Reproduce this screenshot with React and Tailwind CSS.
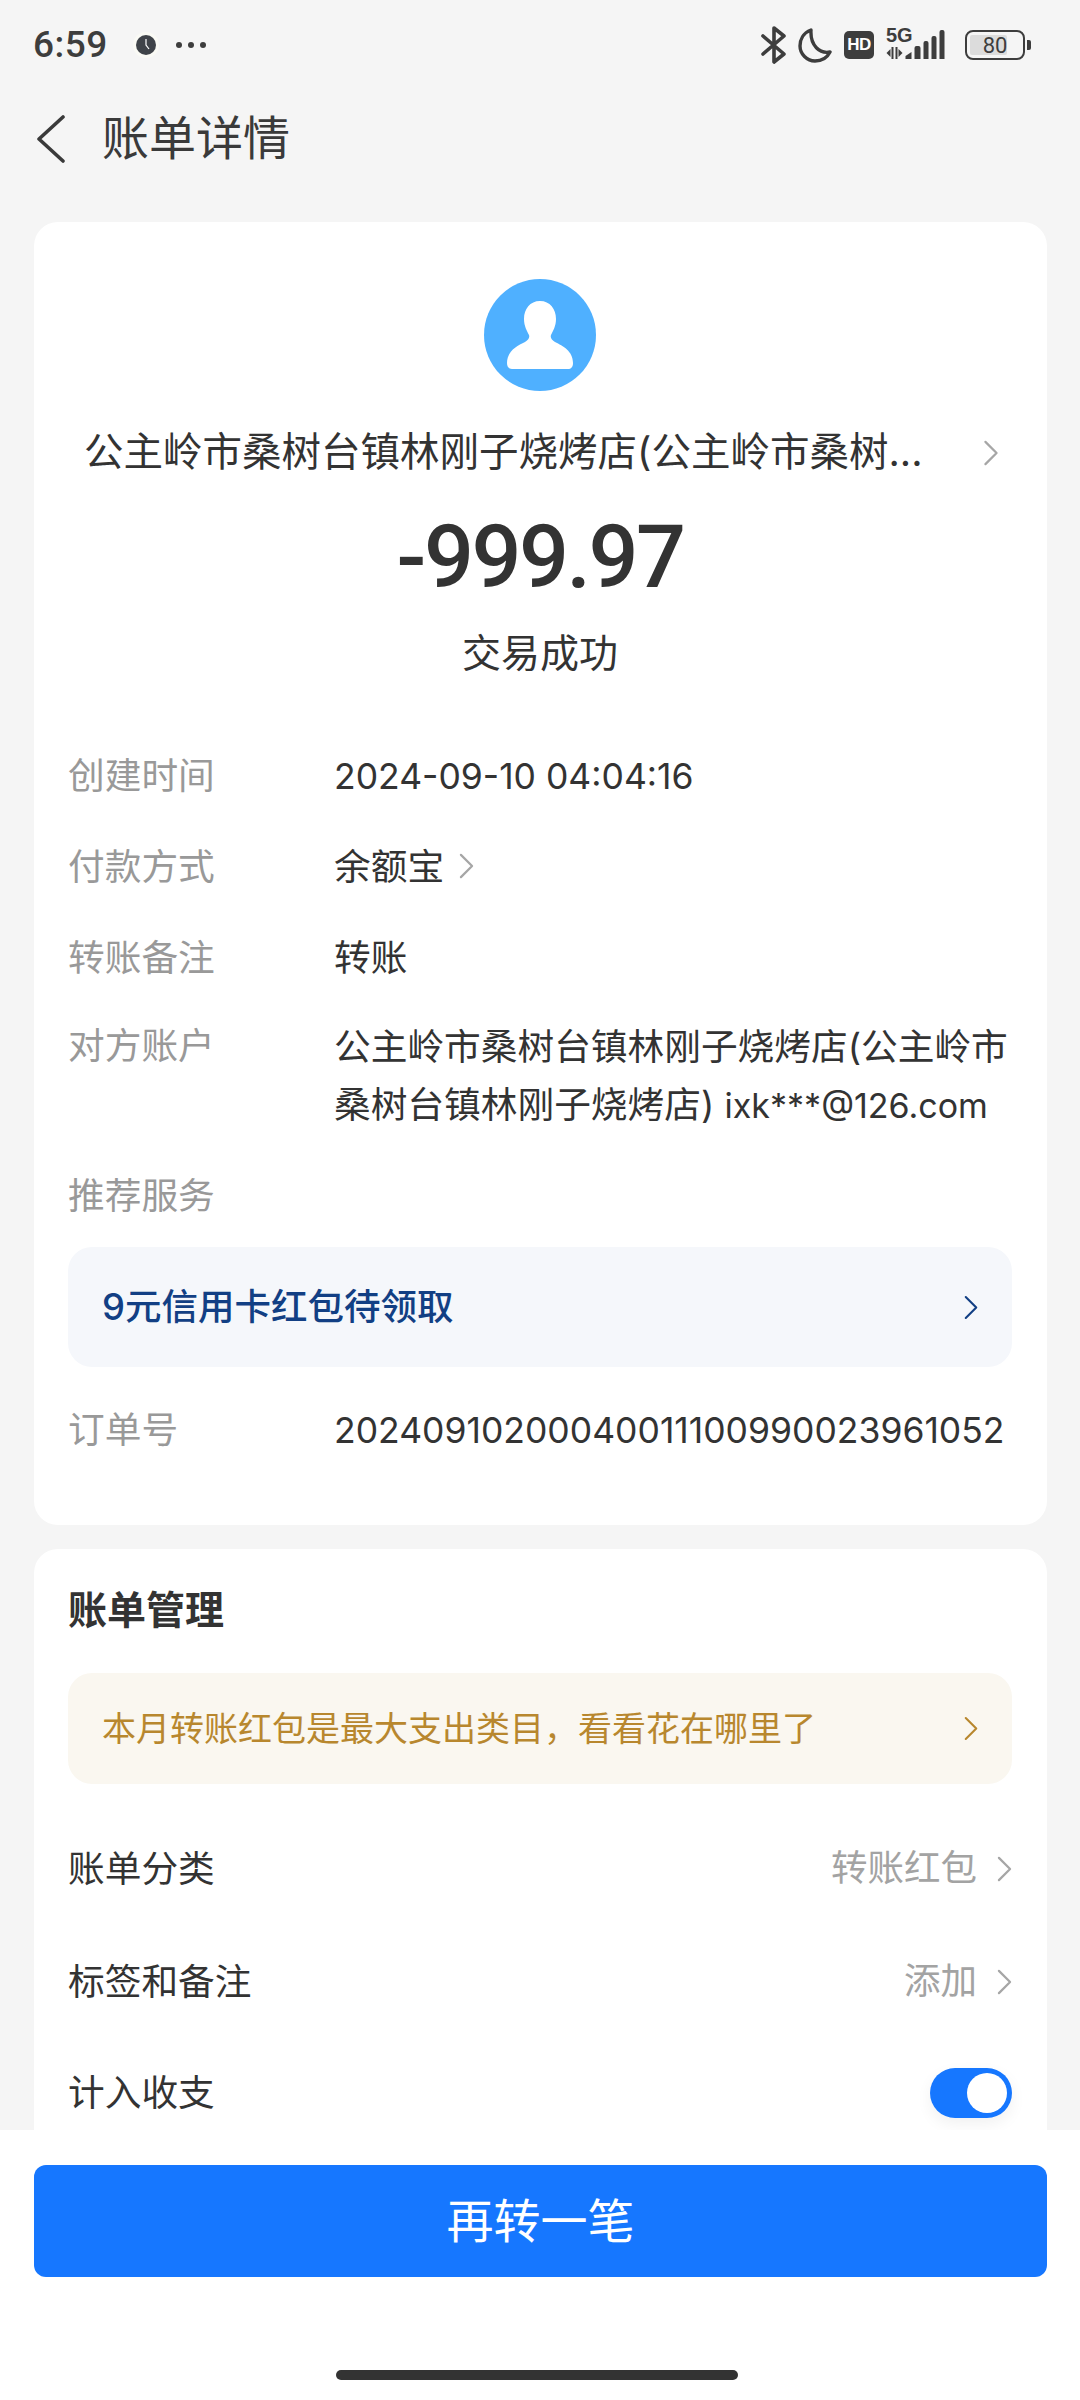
const cjk = "font-['Inter','Noto_Sans_CJK_SC',sans-serif]";

const Chevron = ({ className = "", color = "#a6a6a6", width = 2.4 }) => (
  <svg viewBox="0 0 16 28" className={className} fill="none" stroke={color} strokeWidth={width} strokeLinecap="round" strokeLinejoin="round">
    <path d="M2 2l12 12L2 26" />
  </svg>
);

const StatusIcons = () => (
  <div className="flex items-center">
    {/* bluetooth */}
    <svg viewBox="0 0 26 38" className="w-[26px] h-[38px]" fill="none" stroke="#3d3d3d" strokeWidth="3.6" strokeLinecap="round" strokeLinejoin="round">
      <path d="M2 10l21 18-10 8V2l10 8L2 28" />
    </svg>
    {/* do not disturb */}
    <svg viewBox="0 0 34 36" className="w-[34px] h-[36px] ml-[11px]" fill="none" stroke="#3d3d3d" strokeWidth="3.4" strokeLinejoin="round">
      <path d="M13 3C5 6 2 13 2 19c0 8 7 15 15 15 7 0 12-3 15-9-10 2-20-6-19-22z" />
    </svg>
    <div className="w-[30px] h-[28px] ml-[12px] rounded-[5px] bg-[#3d3d3d] flex items-center justify-center text-white text-[17px] font-bold font-['Liberation_Sans',sans-serif] tracking-[-0.5px]">
      HD
    </div>
    {/* 5G with data arrows and signal bars */}
    <div className="relative w-[66px] h-[32px] ml-[12px]">
      <span className="absolute left-0 top-[-5px] text-[#3d3d3d] text-[20px] leading-[22px] font-bold font-['Liberation_Sans',sans-serif]">5G</span>
      <svg viewBox="0 0 65 32" className="w-[66px] h-[32px]" fill="#3d3d3d">
        <path d="M0 24l4-4v8zM5 18h2v12H5zM9 18h2v12H9zM12 20l4 4-4 4z" />
        <path d="M19 30v-3l6-4v7zM28 30V19q0-2 2-2h2q2 0 2 2v11zM37 30V14q0-2 2-2h1q2 0 2 2v16zM45 30V9q0-2 2-2h1q2 0 2 2v21zM53 30V3q0-2 2-2h1q2 0 2 2v27z" />
      </svg>
    </div>
    {/* battery */}
    <div className="ml-[13px] flex items-center">
      <div className="w-[60px] h-[30px] rounded-[8px] border-[2.5px] border-[#3d3d3d] p-[3px] relative flex">
        <div className="w-[37px] h-full rounded-[2px] bg-[#dcdcdc]" />
        <span className="absolute inset-0 flex items-center justify-center text-[#3d3d3d] text-[22px] font-['Roboto',sans-serif]">80</span>
      </div>
      <div className="w-[4px] h-[10px] ml-[2px] rounded-r-[2px] bg-[#3d3d3d]" />
    </div>
  </div>
);

const DetailRow = ({ label, children, className = "h-[91px] items-center" }) => (
  <div className={`flex ${className}`}>
    <div className="w-[266px] shrink-0 text-[36.7px] text-[#999999]">{label}</div>
    <div className="flex-1 min-w-0 text-[36.7px] text-[#333333]">{children}</div>
  </div>
);

const ManageRow = ({ label, value, className = "" }) => (
  <div className={`flex items-center justify-between h-[113px] ${className}`}>
    <span className="text-[36.7px] text-[#333333]">{label}</span>
    <span className="flex items-center text-[36.5px] text-[#a3a3a3]">
      {value}
      <Chevron className="w-[15px] h-[26px] ml-[20px]" />
    </span>
  </div>
);

export default function App() {
  return (
    <div className={`w-[1080px] h-[2400px] flex flex-col overflow-hidden bg-[#f5f5f5] ${cjk}`}>
      <div className="h-[90px] shrink-0 flex items-center justify-between pl-[33px] pr-[49px]">
        <div className="flex items-center">
          <span className="text-[37px] font-medium tracking-[0.5px] text-[#3d3d3d] font-['Roboto',sans-serif]">6:59</span>
          <div className="ml-[25px] w-[26px] h-[26px] rounded-full bg-[#fafaf5] flex items-center justify-center">
            <svg viewBox="0 0 20 20" className="w-[20px] h-[20px]">
              <circle cx="10" cy="10" r="10" fill="#3f4349" />
              <path d="M10 4v6l3 4" stroke="#fff" strokeWidth="1.2" fill="none" />
            </svg>
          </div>
          <div className="ml-[17px] flex gap-[6px]">
            <div className="w-[6px] h-[6px] rounded-full bg-[#3d3d3d]" />
            <div className="w-[6px] h-[6px] rounded-full bg-[#3d3d3d]" />
            <div className="w-[6px] h-[6px] rounded-full bg-[#3d3d3d]" />
          </div>
        </div>
        <StatusIcons />
      </div>

      <div className="h-[97px] shrink-0 flex items-center pl-[37px]">
        <svg viewBox="0 0 28 48" className="w-[28px] h-[48px]" fill="none" stroke="#3a3a3a" strokeWidth="3.6" strokeLinecap="round" strokeLinejoin="round">
          <path d="M26 2L2 24l24 22" />
        </svg>
        <h1 className="ml-[37px] text-[47px] font-normal text-[#3a3a3a]">账单详情</h1>
      </div>

      <div className="flex-1 min-h-0 overflow-hidden pl-[34px] pr-[33px] pt-[35px]">
        <div className="h-[1303px] bg-white rounded-[24px] pl-[34px] pr-[35px] pt-[57px]">
          <div className="flex justify-center">
            <div className="w-[112px] h-[112px] rounded-full bg-[#4fb0ff] flex items-center justify-center">
              <svg viewBox="0 0 66 68" className="w-[66px] h-[68px]" fill="#fff">
                <path d="M33 0C43 0 49 8 49 18 49 25 46 30 44 34 43 37 45 39 48 41 56 45 66 50 66 62 66 66 64 68 61 68H5C2 68 0 66 0 62 0 50 10 45 18 41 21 39 23 37 22 34 20 30 17 25 17 18 17 8 23 0 33 0Z" />
              </svg>
            </div>
          </div>

          <div className="mt-[32px] flex items-center justify-between h-[60px] pl-[16px] pr-[13px]">
            <span className="text-[39.5px] text-[#333333] whitespace-nowrap">公主岭市桑树台镇林刚子烧烤店(公主岭市桑树...</span>
            <Chevron className="w-[16px] h-[26px]" />
          </div>

          <div className="mt-[20px] text-center text-[88px] leading-[108px] tracking-[-2.5px] font-medium font-['Roboto',sans-serif] text-[#333333]">-999.97</div>
          <div className="mt-[12px] text-center text-[39px] leading-[60px] text-[#333333]">交易成功</div>

          <div className="mt-[47px]">
            <DetailRow label="创建时间">
              <span className="text-[35.5px]">2024-09-10 04:04:16</span>
            </DetailRow>
            <DetailRow label="付款方式">
              <span className="flex items-center">
                余额宝
                <Chevron className="w-[15px] h-[26px] ml-[15px]" />
              </span>
            </DetailRow>
            <DetailRow label="转账备注">转账</DetailRow>
            <DetailRow label="对方账户" className="mt-[15px] h-[127px] items-start">
              <div className="leading-[58px] whitespace-nowrap">
                公主岭市桑树台镇林刚子烧烤店(公主岭市
                <br />
                桑树台镇林刚子烧烤店) <span className="text-[34px]">ixk***@126.com</span>
              </div>
            </DetailRow>
            <DetailRow label="推荐服务" className="h-[80px] items-center mt-[11px]" />
          </div>

          <div className="mt-[11px] h-[120px] rounded-[24px] bg-[#f5f7fb] flex items-center justify-between pl-[34px] pr-[34px]">
            <span className="text-[36.5px] font-medium text-[#123f84]">9元信用卡红包待领取</span>
            <Chevron className="w-[14px] h-[27px]" color="#123f84" />
          </div>

          <DetailRow label="订单号" className="h-[91px] mt-[17px] items-center">
            <span className="text-[35.5px] whitespace-nowrap">20240910200040011100990023961052</span>
          </DetailRow>
        </div>

        <div className="mt-[24px] h-[620px] bg-white rounded-[24px] pl-[34px] pr-[35px] pt-[33px]">
          <h2 className="text-[39px] leading-[56px] font-semibold text-[#333333]">账单管理</h2>
          <div className="mt-[35px] h-[111px] rounded-[24px] bg-[#faf7f0] flex items-center justify-between pl-[34px] pr-[34px]">
            <span className="text-[34px] text-[#b8872e]">本月转账红包是最大支出类目，看看花在哪里了</span>
            <Chevron className="w-[14px] h-[27px]" color="#b8872e" />
          </div>
          <ManageRow label="账单分类" value="转账红包" className="mt-[28px]" />
          <ManageRow label="标签和备注" value="添加" />
          <div className="flex items-center justify-between h-[110px]">
            <span className="text-[36.7px] text-[#333333]">计入收支</span>
            <div className="w-[82px] h-[50px] rounded-full bg-[#1677ff] flex items-center justify-end pr-[5px] shadow-[0_6px_16px_rgba(0,0,0,0.06)]">
              <div className="w-[40px] h-[40px] rounded-full bg-white" />
            </div>
          </div>
        </div>
      </div>

      <div className="h-[270px] shrink-0 bg-white pl-[34px] pr-[33px] pt-[35px] flex flex-col items-center">
        <div className="w-full h-[112px] rounded-[12px] bg-[#1677ff] flex items-center justify-center text-white text-[47px]">
          再转一笔
        </div>
        <div className="mt-[93px] mr-[7px] w-[402px] h-[10px] rounded-full bg-[#333333]" />
      </div>
    </div>
  );
}
